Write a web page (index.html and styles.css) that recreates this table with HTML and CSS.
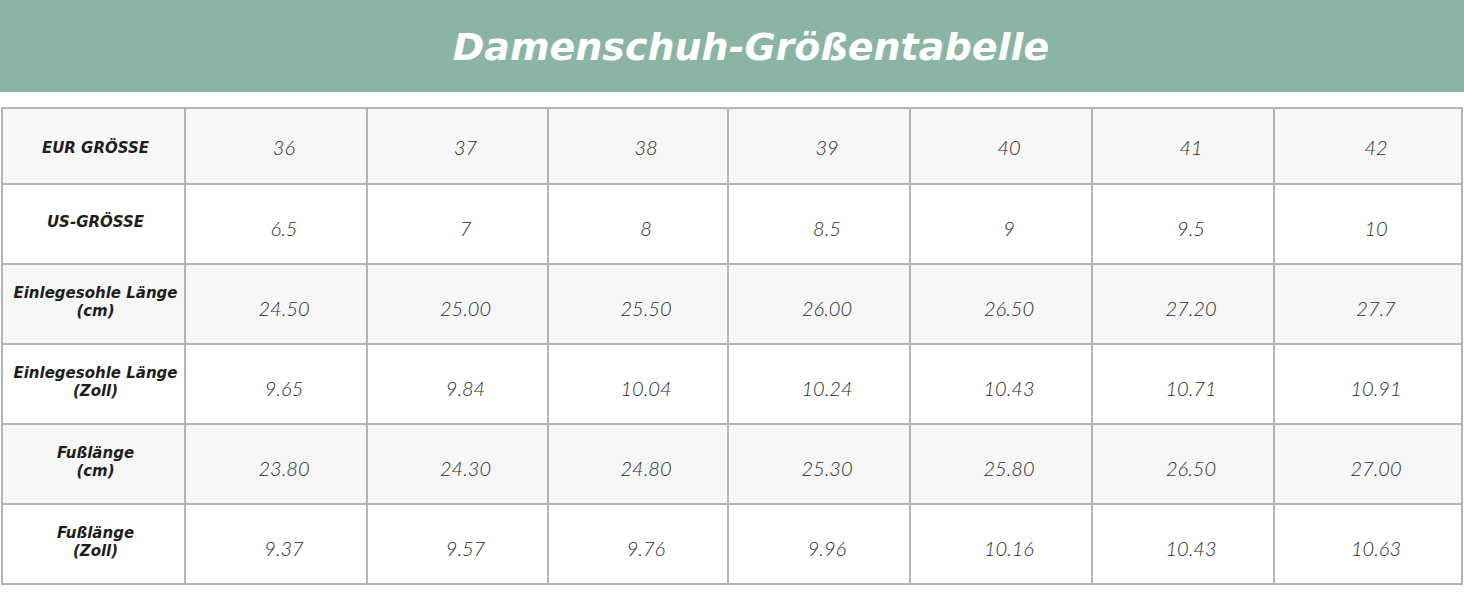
FILE: index.html
```html
<!DOCTYPE html>
<html lang="de">
<head>
<meta charset="utf-8">
<title>Damenschuh-Größentabelle</title>
<link rel="stylesheet" href="styles.css">
</head>
<body>
<header class="banner"><h1 class="title">Damenschuh-Größentabelle</h1></header>
<table class="sizes">
  <colgroup>
    <col class="c-label"><col class="c-a"><col class="c-b"><col class="c-c"><col class="c-a"><col class="c-a"><col class="c-a"><col class="c-last">
  </colgroup>
  <tbody>
    <tr class="row row-first shade">
      <th class="label">EUR GRÖSSE</th>
      <td>36</td><td>37</td><td>38</td><td>39</td><td>40</td><td>41</td><td>42</td>
    </tr>
    <tr class="row">
      <th class="label">US-GRÖSSE</th>
      <td>6.5</td><td>7</td><td>8</td><td>8.5</td><td>9</td><td>9.5</td><td>10</td>
    </tr>
    <tr class="row shade">
      <th class="label">Einlegesohle Länge<br>(cm)</th>
      <td>24.50</td><td>25.00</td><td>25.50</td><td>26.00</td><td>26.50</td><td>27.20</td><td>27.7</td>
    </tr>
    <tr class="row">
      <th class="label">Einlegesohle Länge<br>(Zoll)</th>
      <td>9.65</td><td>9.84</td><td>10.04</td><td>10.24</td><td>10.43</td><td>10.71</td><td>10.91</td>
    </tr>
    <tr class="row shade">
      <th class="label">Fußlänge<br>(cm)</th>
      <td>23.80</td><td>24.30</td><td>24.80</td><td>25.30</td><td>25.80</td><td>26.50</td><td>27.00</td>
    </tr>
    <tr class="row">
      <th class="label">Fußlänge<br>(Zoll)</th>
      <td>9.37</td><td>9.57</td><td>9.76</td><td>9.96</td><td>10.16</td><td>10.43</td><td>10.63</td>
    </tr>
  </tbody>
</table>
</body>
</html>
```
FILE: styles.css
```css
html, body {
  margin: 0;
  padding: 0;
  background: #ffffff;
}
body {
  font-family: "Lato", "Open Sans", sans-serif;
}
.banner {
  height: 92px;
  background: #8ab4a4;
  display: flex;
  align-items: center;
  justify-content: center;
  padding-left: 38px;
}
.title {
  margin: 0;
  padding-top: 2px;
  color: #ffffff;
  font-family: "DejaVu Sans", sans-serif;
  font-style: italic;
  font-weight: 700;
  font-size: 38px;
  letter-spacing: 0;
}
.sizes {
  margin: 15px 0 0 1px;
  width: 1460px;
  border-collapse: collapse;
  table-layout: fixed;
}
.c-label { width: 183px; }
.c-a { width: 182px; }
.c-b { width: 181px; }
.c-c { width: 180px; }
.c-last { width: 188px; }
.sizes th, .sizes td {
  border: 2px solid #b4b4b4;
  text-align: center;
  vertical-align: middle;
  padding: 0;
  color: #1e1e1e;
}
.row { height: 80px; }
.row-first { height: 76px; }
.shade { background: #f7f7f7; }
.label {
  font-family: "DejaVu Sans", sans-serif;
  font-style: italic;
  font-weight: 700;
  font-size: 15px;
  line-height: 18px;
  color: #111111;
  padding: 0 0 4px 4px !important;
}
.row-first .label { padding: 4px 0 0 4px !important; }
.sizes td {
  font-family: "Lato", sans-serif;
  font-style: italic;
  font-weight: 300;
  font-size: 20px;
  color: #2a2a2a;
  padding: 8px 0 0 16px;
}
.row-first td { padding-top: 2px; }
```
